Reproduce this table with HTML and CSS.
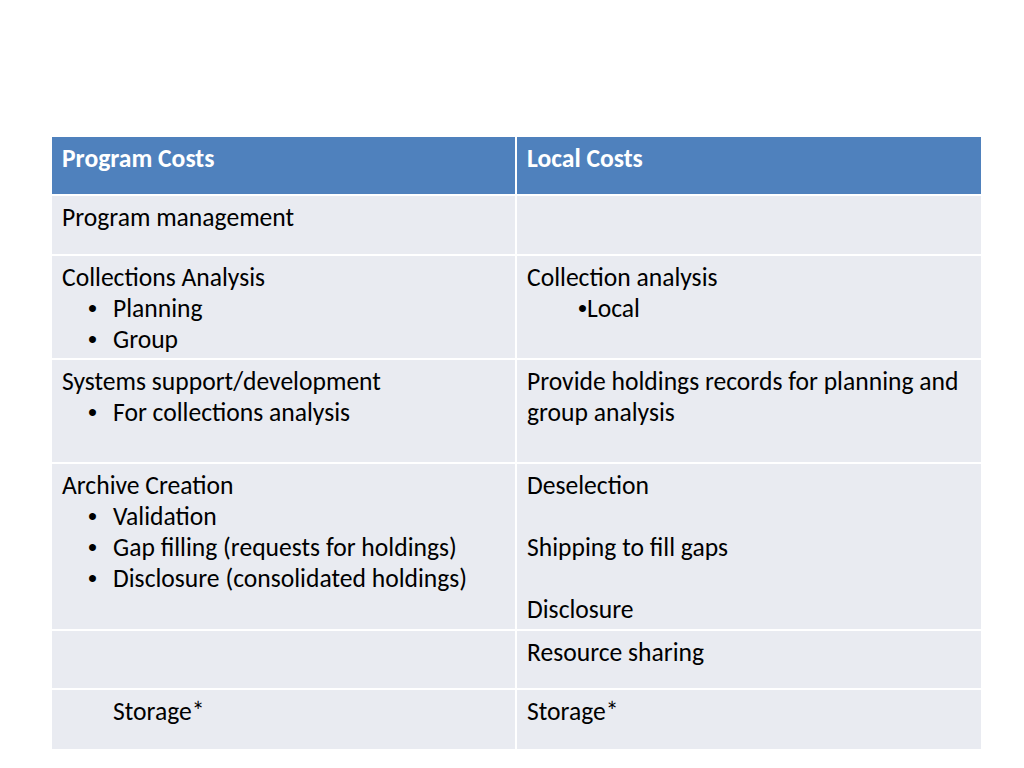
FILE: index.html
```html
<!DOCTYPE html>
<html lang="en">
<head>
<meta charset="utf-8">
<title>Program Costs vs Local Costs</title>
<link rel="stylesheet" href="styles.css">
</head>
<body>
<div class="slide">
  <div class="cost-table">
    <div class="cell head">Program Costs</div>
    <div class="cell head">Local Costs</div>

    <div class="cell">Program management</div>
    <div class="cell"></div>

    <div class="cell">
      <div class="line">Collections Analysis</div>
      <ul class="bullets">
        <li>Planning</li>
        <li>Group</li>
      </ul>
    </div>
    <div class="cell">
      <div class="line">Collection analysis</div>
      <div class="line indent"><span class="dot">•</span>Local</div>
    </div>

    <div class="cell">
      <div class="line">Systems support/development</div>
      <ul class="bullets">
        <li>For collections analysis</li>
      </ul>
    </div>
    <div class="cell">
      <div class="line">Provide holdings records for planning and group analysis</div>
    </div>

    <div class="cell">
      <div class="line">Archive Creation</div>
      <ul class="bullets">
        <li>Validation</li>
        <li>Gap filling (requests for holdings)</li>
        <li>Disclosure (consolidated holdings)</li>
      </ul>
    </div>
    <div class="cell">
      <div class="line">Deselection</div>
      <div class="line blank"></div>
      <div class="line">Shipping to fill gaps</div>
      <div class="line blank"></div>
      <div class="line">Disclosure</div>
    </div>

    <div class="cell"></div>
    <div class="cell"><div class="line">Resource sharing</div></div>

    <div class="cell"><div class="line indent-text">Storage*</div></div>
    <div class="cell"><div class="line">Storage*</div></div>
  </div>
</div>
</body>
</html>
```

FILE: styles.css
```css
html, body {
  margin: 0;
  padding: 0;
  background: #ffffff;
}

.slide {
  width: 1024px;
  height: 768px;
  padding: 137px 0 0 52px;
  box-sizing: border-box;
  font-family: Carlito, Calibri, Lato, "Liberation Sans", sans-serif;
  font-size: 25.6px;
  line-height: 31px;
  color: #000000;
}

.cost-table {
  display: grid;
  grid-template-columns: 463px 464px;
  grid-template-rows: 57px 58px 102px 102px 165px 57px 59px;
  gap: 2px;
  width: 929px;
  background: #ffffff;
}

.cell {
  background: #e9ebf1;
  padding: 6px 10px 0 10px;
  box-sizing: border-box;
  overflow: hidden;
}

.cell.head {
  background: #4f81bd;
  color: #ffffff;
  font-weight: bold;
}

.line {
  min-height: 31px;
}

.bullets {
  list-style: none;
  margin: 0;
  padding: 0 0 0 26px;
}

.bullets li::before {
  content: "•";
  font-family: "Liberation Sans", Arial, sans-serif;
  display: inline-block;
  width: 25px;
}

.dot {
  font-family: "Liberation Sans", Arial, sans-serif;
}

.indent {
  padding-left: 51px;
}

.indent-text {
  padding-left: 51px;
}
```
